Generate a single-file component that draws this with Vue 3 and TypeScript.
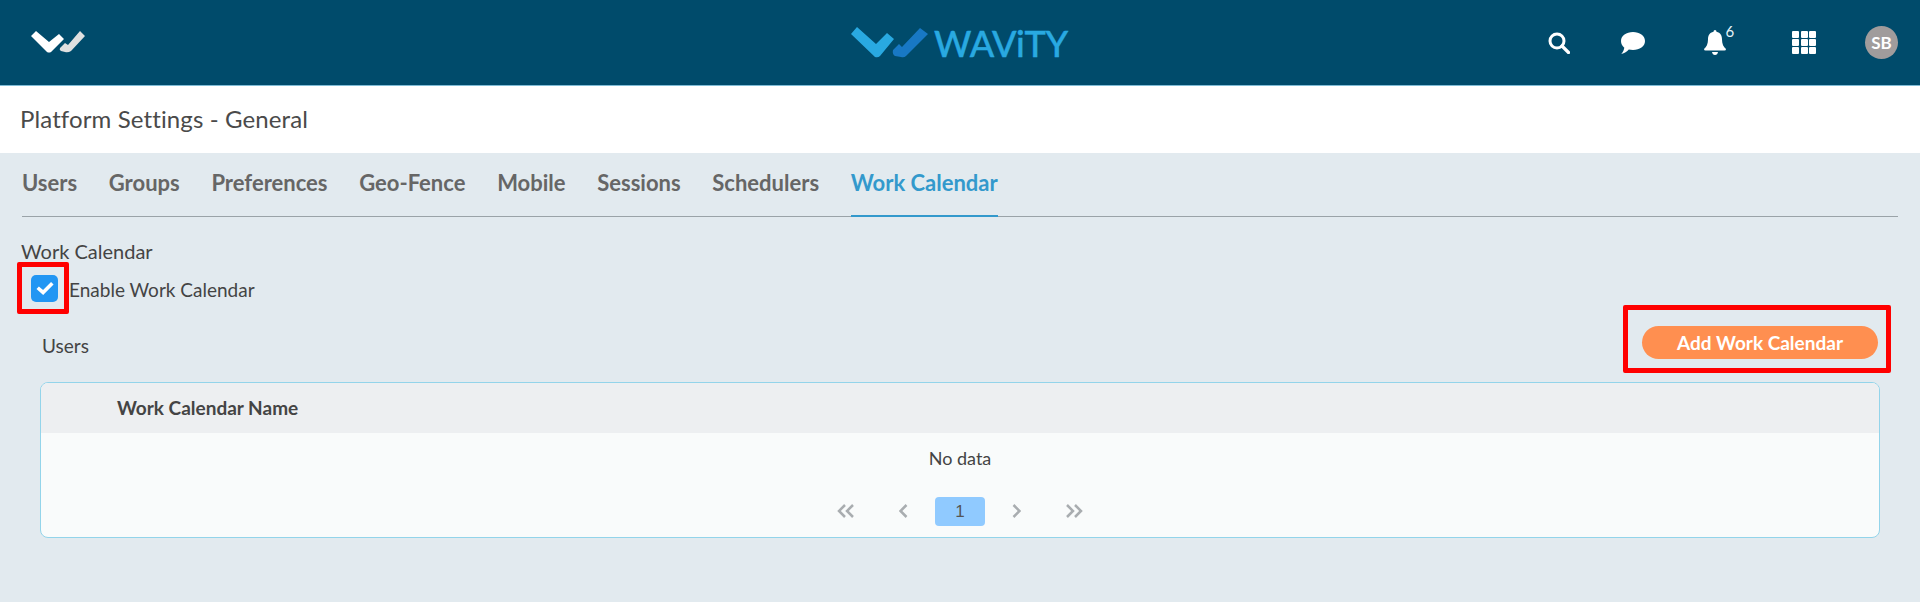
<script setup lang="ts">
const tabs = ['Users', 'Groups', 'Preferences', 'Geo-Fence', 'Mobile', 'Sessions', 'Schedulers', 'Work Calendar']
const activeTab = 'Work Calendar'
</script>

<template>
  <div class="page">
    <header class="topbar">
      <svg class="mini-logo" viewBox="0 0 54 22">
        <path d="M0 5 L5 0 L18 11 L28 3 L33 8 L20 21 Q18 22 16 21 Z" fill="#fff" />
        <path d="M29 17 L34 12 L37 14 L49 0 L54 5 L40 20 Q37 22 34 21 L30 20 Q28 19 29 17 Z" fill="#e0e0e0" />
      </svg>

      <div class="brand">
        <svg class="brand-mark" viewBox="0 0 77 31">
          <path d="M0 7 L6 0 L25 17 L36 6 L43 12 L29 29 Q27 31 24 30 Z" fill="#29a9e1" />
          <path d="M42 23 L48 17 L51 20 L69 1 L77 7 L55 29 Q53 31 50 30 L44 29 Q41 27 42 23 Z" fill="#1878c4" />
        </svg>
        <span class="brand-name">WAViTY</span>
      </div>

      <div class="actions">
        <svg class="icon search" viewBox="0 0 22 22">
          <circle cx="9" cy="9" r="7" fill="none" stroke="#fff" stroke-width="3" />
          <path d="M14 14 L20.500 20.500" stroke="#fff" stroke-width="3.200" stroke-linecap="round" />
        </svg>
        <svg class="icon chat" viewBox="0 0 24 22">
          <path d="M12 0 C18.600 0 24 3.700 24 9 C24 14.300 18.600 18 12 18 C10.500 18 9 17.800 7.800 17.500 C6 19.500 3.500 21.500 0.300 22 C2 20 3 18 3.300 15.800 C1.200 14 0 11.700 0 9 C0 3.700 5.400 0 12 0 Z" fill="#fff" />
        </svg>
        <span class="bell-wrap">
          <svg class="icon bell" viewBox="0 0 22 25">
            <path d="M11 0 Q12.500 0 12.500 1.800 C16.500 2.500 18 5.800 18 9.500 C18 14 19.500 17 22 19 Q22 20.500 20.500 20.500 L1.500 20.500 Q0 20.500 0 19 C2.500 17 4 14 4 9.500 C4 5.800 5.500 2.500 9.500 1.800 Q9.500 0 11 0 Z" fill="#fff" />
            <path d="M8 22 L14 22 Q13.500 25 11 25 Q8.500 25 8 22 Z" fill="#fff" />
          </svg>
          <sup class="badge">6</sup>
        </span>
        <span class="apps">
          <i v-for="n in 9" :key="n"></i>
        </span>
        <span class="avatar">SB</span>
      </div>
    </header>

    <div class="title-bar">Platform Settings - General</div>

    <main class="content">
      <nav class="tabs">
        <a v-for="tab in tabs" :key="tab" class="tab" :class="{ active: tab === activeTab }">{{ tab }}</a>
      </nav>

      <div class="section-label">Work Calendar</div>
      <label class="enable-row">
        <span class="highlight check-box">
          <span class="checkbox">
            <svg viewBox="0 0 16 12" width="18" height="13.500">
              <path d="M1.500 6 L6.300 10.200 L14.500 2" fill="none" stroke="#fff" stroke-width="3.200" />
            </svg>
          </span>
        </span>
        <span class="enable-text">Enable Work Calendar</span>
      </label>

      <div class="users-row">
        <span class="users-label">Users</span>
        <span class="highlight add-box">
          <button class="add-btn" type="button">Add Work Calendar</button>
        </span>
      </div>

      <section class="table">
        <div class="table-head">Work Calendar Name</div>
        <div class="no-data">No data</div>
        <div class="pager">
          <svg class="chev wide" viewBox="0 0 18 14"><path d="M8 1 L2 7 L8 13 M16 1 L10 7 L16 13" /></svg>
          <svg class="chev prev" viewBox="0 0 9 14"><path d="M7.500 1 L1.500 7 L7.500 13" /></svg>
          <span class="page-no">1</span>
          <svg class="chev next" viewBox="0 0 9 14"><path d="M1.500 1 L7.500 7 L1.500 13" /></svg>
          <svg class="chev wide last" viewBox="0 0 18 14"><path d="M2 1 L8 7 L2 13 M10 1 L16 7 L10 13" /></svg>
        </div>
      </section>
    </main>
  </div>
</template>

<style>
html,
body {
  margin: 0;
  background: #e2eaef;
}
</style>

<style scoped>
.page {
  min-height: 602px;
  background: #e2eaef;
  font-family: Lato, "Open Sans", sans-serif;
  color: #444;
  overflow: hidden;
}

.topbar {
  height: 85px;
  background: #004b6b;
  border-bottom: 1px solid #7fbcd6;
  display: grid;
  grid-template-columns: 1fr auto 1fr;
  align-items: center;
  padding: 0 22px 0 31px;
}

.mini-logo {
  width: 54px;
  height: 22px;
  margin-top: -2px;
}

.brand {
  display: flex;
  align-items: center;
  gap: 6px;
  margin-left: -12px;
}

.brand-mark {
  width: 77px;
  height: 31px;
  margin-left: 2px;
}

.brand-name {
  font-size: 36px;
  font-weight: 500;
  line-height: 1;
  color: #29a9e1;
  letter-spacing: -0.3px;
  -webkit-text-stroke: 0.4px #29a9e1;
}

.actions {
  display: flex;
  justify-content: flex-end;
  align-items: center;
}

.icon {
  display: block;
}

.search {
  width: 22px;
  height: 22px;
}

.chat {
  width: 24px;
  height: 22px;
  margin-left: 51px;
}

.bell-wrap {
  position: relative;
  margin-left: 59px;
}

.bell {
  width: 22px;
  height: 25px;
}

.badge {
  position: absolute;
  left: 21px;
  top: -6px;
  font-size: 15px;
  line-height: 1;
  color: #e8f4fa;
}

.apps {
  display: grid;
  grid-template-columns: repeat(3, 7px);
  grid-auto-rows: 6.500px;
  gap: 1.300px;
  margin-left: 66px;
}

.apps i {
  background: #fff;
  border-radius: 1px;
}

.avatar {
  width: 33px;
  height: 33px;
  border-radius: 50%;
  background: #a09c9c;
  color: #fff;
  font-size: 17px;
  font-weight: 700;
  display: flex;
  align-items: center;
  justify-content: center;
  margin-left: 49px;
}

.title-bar {
  height: 67px;
  background: #fff;
  padding-left: 20px;
  font-size: 24px;
  letter-spacing: 0.12px;
  line-height: 66px;
  color: #4a4a4a;
}

.content {
  padding: 0 22px 0 21px;
}

.tabs {
  display: flex;
  gap: 31.700px;
  height: 63px;
  margin-left: 1px;
  border-bottom: 1px solid #9aa3a8;
}

.tab {
  font-size: 22px;
  font-weight: 700;
  line-height: 59px;
  color: #666;
}

.tab.active {
  color: #3399cc;
  border-bottom: 2px solid #3399cc;
  height: 62px;
  margin-bottom: -1px;
}

.section-label {
  margin-top: 22px;
  font-size: 20px;
  line-height: 24px;
}

.enable-row {
  display: flex;
  align-items: center;
  font-size: 19px;
  margin-left: -4px;
}

.enable-text {
  margin-top: 2px;
}

.highlight {
  border: 5px solid #ff0000;
  border-radius: 2px;
  box-sizing: border-box;
  display: flex;
  align-items: center;
  flex-shrink: 0;
}

.check-box {
  width: 52px;
  height: 52px;
  padding-left: 9px;
  margin-top: -1px;
}

.checkbox {
  width: 27px;
  height: 27px;
  border-radius: 5px;
  background: #2196f3;
  display: flex;
  align-items: center;
  justify-content: center;
}

.users-row {
  display: flex;
  justify-content: space-between;
  align-items: center;
  height: 68px;
  margin-top: -9px;
  padding-left: 21px;
  padding-right: 7px;
}

.users-label {
  font-size: 19px;
  margin-top: 13px;
}

.add-box {
  width: 268px;
  height: 68px;
  padding-left: 14px;
}

.add-btn {
  width: 236px;
  height: 33px;
  margin-top: 7px;
  border: 0;
  border-radius: 17px;
  background: #ff8f50;
  color: #fff;
  font-family: inherit;
  font-size: 19px;
  font-weight: 700;
  padding: 0;
}

.table {
  margin: 9px 18px 0 19px;
  height: 156px;
  box-sizing: border-box;
  border: 1px solid #93d4ea;
  border-radius: 8px;
  background: #f9fbfb;
  overflow: hidden;
}

.table-head {
  height: 50px;
  background: #edeff1;
  padding-left: 76px;
  font-size: 19px;
  font-weight: 700;
  line-height: 50px;
}

.no-data {
  text-align: center;
  font-size: 18px;
  line-height: 50px;
}

.pager {
  display: flex;
  justify-content: center;
  align-items: center;
  height: 30px;
  margin-top: 13px;
}

.chev {
  height: 14px;
  fill: none;
  stroke: #a9adb0;
  stroke-width: 2.500;
}

.chev.wide {
  width: 18px;
}

.chev.prev,
.chev.next {
  width: 9px;
}

.prev {
  margin: 0 27px 0 44px;
}

.next {
  margin: 0 44px 0 27px;
}

.page-no {
  width: 50px;
  height: 29px;
  border-radius: 4px;
  background: #90caff;
  font-family: "Liberation Sans", sans-serif;
  font-size: 17px;
  line-height: 29px;
  text-align: center;
  color: #555;
}
</style>
